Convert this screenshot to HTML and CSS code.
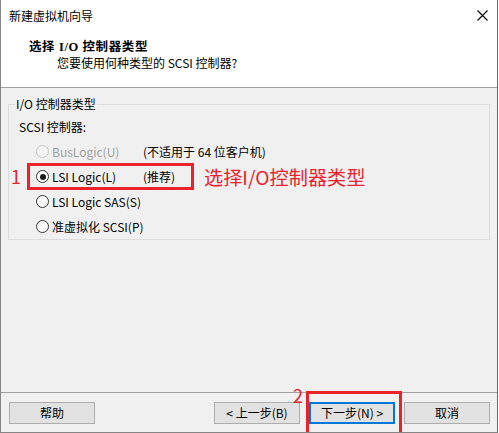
FILE: index.html
```html
<!DOCTYPE html>
<html lang="zh-CN">
<head>
<meta charset="utf-8">
<title>新建虚拟机向导</title>
<link rel="stylesheet" href="styles.css">
</head>
<body>
<div class="window">
  <div class="header">
    <div class="titlebar">
      <span class="title">新建虚拟机向导</span>
      <svg class="close" width="11" height="11" viewBox="0 0 11 11"><path d="M0.5 0.5L10.5 10.5M10.5 0.5L0.5 10.5" stroke="#000" stroke-width="1.1" fill="none"/></svg>
    </div>
    <div class="heading">选择 I/O 控制器类型</div>
    <div class="subtitle">您要使用何种类型的 SCSI 控制器?</div>
  </div>
  <div class="content">
    <fieldset class="group">
      <legend class="legend">I/O 控制器类型</legend>
      <div class="group-inner">
        <div class="label">SCSI 控制器:</div>
        <div class="options">
          <div class="row disabled">
            <span class="radio"></span>
            <span class="opt-text">BusLogic(U)</span>
            <span class="note">(不适用于 64 位客户机)</span>
          </div>
          <div class="row">
            <span class="radio checked"></span>
            <span class="opt-text">LSI Logic(L)</span>
            <span class="note">(推荐)</span>
            <span class="annot-box box1"></span>
            <span class="annot-num num1">1</span>
            <span class="annot-text">选择I/O控制器类型</span>
          </div>
          <div class="row">
            <span class="radio"></span>
            <span class="opt-text">LSI Logic SAS(S)</span>
          </div>
          <div class="row">
            <span class="radio"></span>
            <span class="opt-text">准虚拟化 SCSI(P)</span>
          </div>
        </div>
      </div>
    </fieldset>
  </div>
  <div class="footer">
    <button class="btn">帮助</button>
    <div class="spacer"></div>
    <button class="btn">&lt; 上一步(B)</button>
    <div class="next-wrap">
      <button class="btn default">下一步(N) &gt;</button>
      <span class="annot-box box2"></span>
      <span class="annot-num num2">2</span>
    </div>
    <button class="btn">取消</button>
  </div>
</div>
</body>
</html>
```

FILE: styles.css
```css
html, body {
  margin: 0;
  padding: 0;
  background: #ffffff;
}

body {
  font-family: "Noto Sans CJK SC", "Microsoft YaHei", sans-serif;
  font-size: 12px;
  color: #000;
}

.window {
  width: 498px;
  height: 433px;
  box-sizing: border-box;
  border-left: 1px solid #858585;
  border-right: 1px solid #6a6a6a;
  border-bottom: 1px solid #858585;
  display: flex;
  flex-direction: column;
  overflow: hidden;
  position: relative;
}

.header {
  background: #ffffff;
  height: 88px;
  box-sizing: border-box;
  border-bottom: 1px solid #a0a0a0;
}

.titlebar {
  height: 32px;
  display: flex;
  align-items: center;
  justify-content: space-between;
  padding: 0 9px 0 8px;
}

.title {
  line-height: 16px;
}

.close {
  display: block;
  margin-top: -2px;
}

.heading {
  margin-top: 7px;
  padding-left: 28px;
  line-height: 16px;
  font-weight: bold;
  font-family: "Liberation Serif", "Noto Sans CJK SC", serif;
  font-size: 12.5px;
  letter-spacing: 0.6px;
}

.subtitle {
  padding-left: 56px;
  line-height: 16px;
}

.content {
  flex: 1;
  background: #f0f0f0;
  padding: 8px 7px 0 7px;
}

.group {
  margin: 0;
  padding: 0 0 0 6px;
  border: 1px solid #dcdcdc;
  min-width: 0;
}

.legend {
  padding: 0 1px;
  line-height: 16px;
}

.group-inner {
  padding: 7px 0 0 4px;
}

.label {
  line-height: 16px;
}

.options {
  margin-top: 4px;
}

.row {
  position: relative;
  height: 25px;
  display: flex;
  align-items: center;
  padding-left: 17px;
}

.radio {
  width: 13px;
  height: 13px;
  box-sizing: border-box;
  border: 1px solid #333333;
  border-radius: 50%;
  background: #ffffff;
  position: relative;
  flex: none;
}

.radio.checked::after {
  content: "";
  position: absolute;
  left: 2.5px;
  top: 2.5px;
  width: 6px;
  height: 6px;
  border-radius: 50%;
  background: #1a1a1a;
}

.opt-text {
  margin-left: 3px;
  width: 91px;
  white-space: nowrap;
  line-height: 16px;
}

.note {
  white-space: nowrap;
  line-height: 16px;
}

.row.disabled .radio {
  border-color: #c4c4c4;
  background: #f4f4f4;
}

.row.disabled .opt-text {
  color: #a0a0a0;
}

.annot-box {
  position: absolute;
  box-sizing: border-box;
  border: 3px solid #e8232c;
  pointer-events: none;
}

.box1 {
  left: 8px;
  top: -1px;
  width: 167px;
  height: 27px;
}

.annot-num {
  position: absolute;
  color: #e8232c;
  font-family: "Noto Sans CJK SC", sans-serif;
  font-size: 18px;
  line-height: 20px;
}

.num1 {
  left: -8px;
  top: 2px;
}

.annot-text {
  position: absolute;
  left: 185px;
  top: 1px;
  color: #e8232c;
  font-size: 19.2px;
  line-height: 24px;
  white-space: nowrap;
}

.footer {
  height: 40px;
  box-sizing: border-box;
  border-top: 1px solid #a0a0a0;
  background: #f0f0f0;
  display: flex;
  align-items: flex-start;
  padding: 9px 7px 0 8px;
  gap: 9px;
}

.spacer {
  flex: 1;
}

.btn {
  width: 86px;
  height: 22px;
  box-sizing: border-box;
  margin: 0;
  padding: 0;
  border: 1px solid #adadad;
  background: #e1e1e1;
  font-family: "Noto Sans CJK SC", sans-serif;
  font-size: 12px;
  color: #000;
  line-height: 18px;
}

.btn.default {
  border: 2px solid #0078d7;
}

.next-wrap {
  position: relative;
  display: flex;
}

.box2 {
  left: -3px;
  top: -11px;
  width: 96px;
  height: 45px;
}

.num2 {
  left: -16px;
  top: -17px;
}
```
